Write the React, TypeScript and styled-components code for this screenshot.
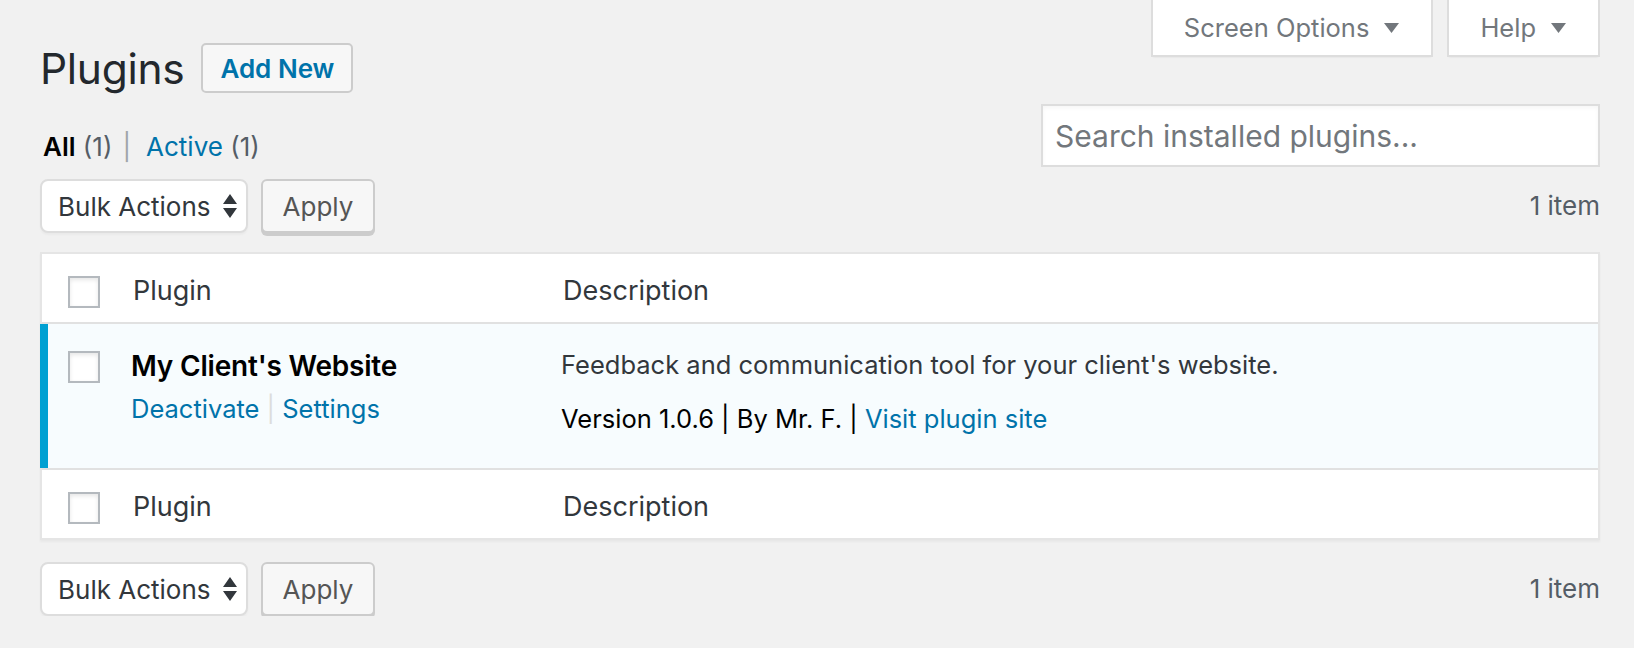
import styled, { createGlobalStyle } from "styled-components";

const GlobalStyle = createGlobalStyle`
  html, body {
    margin: 0;
    padding: 0;
    background: #f1f1f1;
  }
  body {
    font-family: Inter, "Noto Sans", "Liberation Sans", sans-serif;
    color: #444;
    -webkit-font-smoothing: antialiased;
  }
  * {
    box-sizing: border-box;
  }
`;

const Wrap = styled.div`
  padding: 0 34px 0 40px;
  width: 1634px;
`;

const Header = styled.header`
  display: flex;
  justify-content: space-between;
  align-items: flex-start;
`;

const TitleGroup = styled.div`
  display: flex;
  align-items: flex-start;
  gap: 17px;
  padding-top: 39px;
`;

const Title = styled.h1`
  margin: 0;
  font-size: 42.5px;
  font-weight: 400;
  line-height: 60px;
  color: #23282d;
  letter-spacing: -0.3px;
`;

const AddNew = styled.a`
  display: inline-flex;
  align-items: center;
  height: 50px;
  padding: 0 17px;
  margin-top: 4px;
  border: 2px solid #ccc;
  border-radius: 5px;
  background: #f7f7f7;
  color: #0073aa;
  font-size: 26px;
  font-weight: 600;
  text-decoration: none;
`;

const Tabs = styled.div`
  display: flex;
  gap: 14px;
`;

const Tab = styled.button`
  display: flex;
  align-items: center;
  gap: 15px;
  height: 57px;
  padding: 0 32px 0 31px;
  background: #fff;
  border: 2px solid #ddd;
  border-top: none;
  color: #72777c;
  font-family: inherit;
  font-size: 25.5px;
  box-shadow: 0 2px 2px -2px rgba(0, 0, 0, 0.1);
`;

const FilterRow = styled.div`
  display: flex;
  justify-content: space-between;
  align-items: flex-end;
  margin-top: 5px;
`;

const SubSub = styled.ul`
  display: flex;
  margin: 0;
  padding: 0 0 0 3px;
  list-style: none;
  font-size: 26px;
  line-height: 40px;
  color: #646970;
`;

const SubItem = styled.li`
  white-space: pre;
`;

const Current = styled.strong`
  color: #000;
  font-weight: 600;
`;

const Count = styled.span`
  color: #555d66;
`;

const Sep = styled.span`
  color: #a0a5aa;
  padding: 0 15px 0 10px;
`;

const Link = styled.a`
  color: #0073aa;
  text-decoration: none;
`;

const Search = styled.input`
  width: 559px;
  height: 63px;
  padding: 0 12px;
  border: 2px solid #ddd;
  background: #fff;
  font-family: inherit;
  font-size: 30px;
  color: #32373c;
  box-shadow: inset 0 2px 4px rgba(0, 0, 0, 0.04);
  outline: none;
  &::placeholder {
    color: #72777c;
  }
`;

const TableNav = styled.div<{ $top: number }>`
  display: flex;
  align-items: flex-start;
  gap: 13px;
  margin-top: ${(p) => p.$top}px;
  height: 54px;
`;

const Select = styled.div`
  display: flex;
  align-items: center;
  justify-content: space-between;
  width: 208px;
  height: 54px;
  padding: 0 9px 0 16px;
  border: 2px solid #ddd;
  border-radius: 8px;
  background: #fff;
  box-shadow: 0 2px 2px rgba(0, 0, 0, 0.03);
  color: #32373c;
  font-size: 26px;
`;

const ApplyBtn = styled.button`
  height: 54px;
  width: 114px;
  padding: 0;
  border: 2px solid #ccc;
  border-radius: 6px;
  background: #f7f7f7;
  box-shadow: 0 3px 0 #ccc;
  color: #555;
  font-family: inherit;
  font-size: 26px;
`;

const ItemCount = styled.span`
  margin-left: auto;
  font-size: 26px;
  line-height: 54px;
  color: #555d66;
`;

const Table = styled.div`
  margin-top: 19px;
  border: 2px solid #e5e5e5;
  background: #fff;
  box-shadow: 0 2px 2px rgba(0, 0, 0, 0.04);
`;

const Row = styled.div<{ $active?: boolean; $height: number }>`
  display: grid;
  grid-template-columns: ${(p) => (p.$active ? "76px" : "82px")} 430px 1fr;
  height: ${(p) => p.$height}px;
  background: ${(p) => (p.$active ? "#f7fcfe" : "#fff")};
  border-left: ${(p) => (p.$active ? "8px solid #00a0d2" : "none")};
  margin-left: ${(p) => (p.$active ? "-2px" : "0")};
`;

const Divider = styled.div`
  height: 2px;
  background: #e1e1e1;
`;

const CheckCell = styled.div<{ $top: number; $left: number }>`
  padding: ${(p) => p.$top}px 0 0 ${(p) => p.$left}px;
`;

const Checkbox = styled.span`
  display: block;
  width: 32px;
  height: 32px;
  border: 2px solid #b4b9be;
  background: #fff;
  box-shadow: inset 0 2px 4px rgba(0, 0, 0, 0.1);
`;

const HeadCell = styled.div`
  padding: 19px 0 0 9px;
  font-size: 27px;
  line-height: 36px;
  color: #32373c;
`;

const TitleCell = styled.div`
  padding: 24px 0 0 7px;
`;

const PluginName = styled.strong`
  display: block;
  font-size: 28px;
  font-weight: 600;
  line-height: 36px;
  color: #000;
  letter-spacing: -0.2px;
`;

const RowActions = styled.div`
  margin-top: 7px;
  font-size: 25.5px;
  line-height: 36px;
  color: #ddd;
  white-space: pre;
`;

const DescCell = styled.div`
  padding: 23px 0 0 7px;
  font-size: 25.5px;
  line-height: 36px;
`;

const DescText = styled.p`
  margin: 0;
  color: #32373c;
`;

const Meta = styled.div`
  margin-top: 18px;
  color: #000;
  white-space: pre;
`;

function Caret() {
  return (
    <svg width="15" height="10" viewBox="0 0 15 10">
      <path d="M0 0 L15 0 L7.5 10 Z" fill="#72777c" />
    </svg>
  );
}

function SortArrows() {
  return (
    <svg width="14" height="24" viewBox="0 0 14 24">
      <path d="M0 10 L7 0 L14 10 Z M0 14 L14 14 L7 24 Z" fill="#32373c" />
    </svg>
  );
}

function Nav({ top }: { top: number }) {
  return (
    <TableNav $top={top}>
      <Select>
        <span>Bulk Actions</span>
        <SortArrows />
      </Select>
      <ApplyBtn>Apply</ApplyBtn>
      <ItemCount>1 item</ItemCount>
    </TableNav>
  );
}

function ColumnRow() {
  return (
    <Row $height={68}>
      <CheckCell $top={22} $left={26}>
        <Checkbox />
      </CheckCell>
      <HeadCell>Plugin</HeadCell>
      <HeadCell>Description</HeadCell>
    </Row>
  );
}

export default function App() {
  return (
    <>
      <GlobalStyle />
      <Wrap>
        <Header>
          <TitleGroup>
            <Title>Plugins</Title>
            <AddNew href="#">Add New</AddNew>
          </TitleGroup>
          <Tabs>
            <Tab>
              Screen Options <Caret />
            </Tab>
            <Tab>
              Help <Caret />
            </Tab>
          </Tabs>
        </Header>

        <FilterRow>
          <SubSub>
            <SubItem>
              <Current>All</Current> <Count>(1)</Count>
              <Sep>|</Sep>
            </SubItem>
            <SubItem>
              <Link href="#">Active</Link> <Count>(1)</Count>
            </SubItem>
          </SubSub>
          <Search type="search" placeholder="Search installed plugins..." />
        </FilterRow>

        <Nav top={12} />

        <Table>
          <ColumnRow />
          <Divider />
          <Row $active $height={144}>
            <CheckCell $top={27} $left={20}>
              <Checkbox />
            </CheckCell>
            <TitleCell>
              <PluginName>My Client's Website</PluginName>
              <RowActions>
                <Link href="#">Deactivate</Link> | <Link href="#">Settings</Link>
              </RowActions>
            </TitleCell>
            <DescCell>
              <DescText>
                Feedback and communication tool for your client's website.
              </DescText>
              <Meta>
                Version 1.0.6 | By Mr. F. | <Link href="#">Visit plugin site</Link>
              </Meta>
            </DescCell>
          </Row>
          <Divider />
          <ColumnRow />
        </Table>

        <Nav top={22} />
      </Wrap>
    </>
  );
}
